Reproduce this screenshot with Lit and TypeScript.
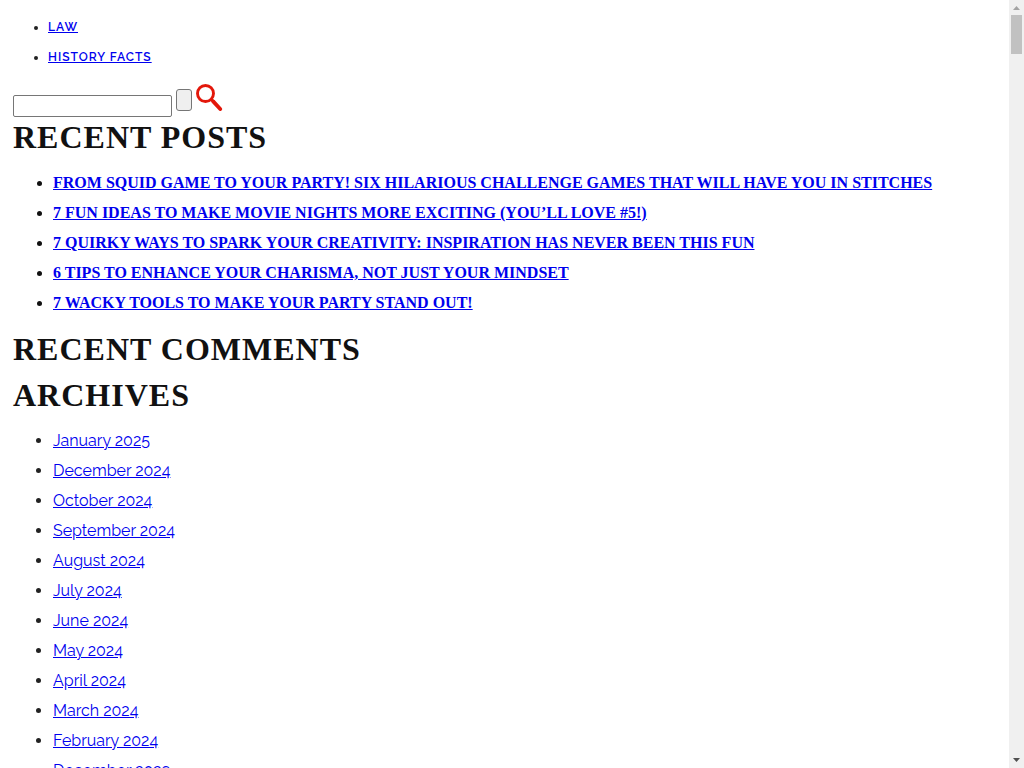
import { LitElement, html, css } from "lit";
import { customElement } from "lit/decorators.js";

const TOPICS = ["Law", "History Facts"];

const POSTS = [
  "From Squid Game to Your Party! Six Hilarious Challenge Games That Will Have You in Stitches",
  "7 Fun Ideas to Make Movie Nights More Exciting (You’ll Love #5!)",
  "7 Quirky Ways to Spark Your Creativity: Inspiration Has Never Been This Fun",
  "6 Tips to Enhance Your Charisma, Not Just Your Mindset",
  "7 Wacky Tools to Make Your Party Stand Out!",
];

const MONTHS = [
  "January 2025",
  "December 2024",
  "October 2024",
  "September 2024",
  "August 2024",
  "July 2024",
  "June 2024",
  "May 2024",
  "April 2024",
  "March 2024",
  "February 2024",
  "December 2023",
];

@customElement("app-root")
export class AppRoot extends LitElement {
  static styles = css`
    :host {
      display: flex;
      height: 100vh;
      overflow: hidden;
      background: #fff;
      color: #222;
      font: 16px/30px Raleway, Lato, sans-serif;
    }
    .page {
      flex: 1;
      min-width: 0;
      overflow: hidden;
      padding: 12px 8px 0;
    }
    ul {
      margin: 0;
      padding: 0 0 0 40px;
    }
    a {
      color: #0000ee;
    }
    .topics {
      font-size: 12px;
      font-weight: 600;
      letter-spacing: 1px;
      text-transform: uppercase;
    }
    .body {
      padding: 0 5px;
    }
    .search {
      display: flex;
      gap: 4px;
      align-items: flex-start;
      padding-top: 11px;
      height: 31px;
    }
    .field {
      box-sizing: border-box;
      width: 159px;
      height: 22px;
      margin-top: 12px;
      border: 1px solid #767676;
      border-radius: 2px;
      background: #fff;
    }
    .submit {
      box-sizing: border-box;
      width: 16px;
      height: 22px;
      margin-top: 6px;
      padding: 0;
      border: 1px solid #767676;
      border-radius: 3px;
      background: #efefef;
    }
    h2 {
      margin: 0;
      color: #111;
      font: bold 32px/46px "Liberation Serif", serif;
      letter-spacing: 1px;
      text-transform: uppercase;
    }
    .posts,
    .months {
      margin: 8px 0;
    }
    .posts {
      color: #111;
      font-family: "Liberation Serif", serif;
      font-weight: bold;
      text-transform: uppercase;
    }
    .rail {
      flex: none;
      display: flex;
      flex-direction: column;
      align-items: center;
      width: 15px;
      background: #f0f0f0;
    }
    .arrow {
      flex: none;
      display: block;
    }
    .thumb {
      width: 11px;
      height: 39px;
      background: #c1c1c1;
    }
    .down {
      margin-top: auto;
    }
  `;

  private links(items: string[], kind: string) {
    return html`<ul class=${kind}>
      ${items.map((item) => html`<li><a href="#">${item}</a></li>`)}
    </ul>`;
  }

  render() {
    return html`
      <main class="page">
        <nav>${this.links(TOPICS, "topics")}</nav>
        <div class="body">
          <form class="search" role="search" @submit=${(e: Event) => e.preventDefault()}>
            <input class="field" type="text" aria-label="Search" />
            <button class="submit" type="submit" aria-label="Search"></button>
            <svg width="27" height="28" viewBox="0 0 27 28" fill="none" stroke="#e3170a" aria-hidden="true">
              <circle cx="9.5" cy="10.5" r="8" stroke-width="2.9" />
              <path d="M15.200 16.200l3 3" stroke-width="3" />
              <path d="M17.200 18.400l7 7.600" stroke-width="3.800" stroke-linecap="round" />
            </svg>
          </form>
          <h2>Recent Posts</h2>
          ${this.links(POSTS, "posts")}
          <h2>Recent Comments</h2>
          <h2>Archives</h2>
          ${this.links(MONTHS, "months")}
        </div>
      </main>
      <div class="rail" aria-hidden="true">
        <svg class="arrow" width="15" height="15"><path d="M4 10h7L7.500 6z" fill="#a3a3a3" /></svg>
        <div class="thumb"></div>
        <svg class="arrow down" width="15" height="15"><path d="M4 5h7L7.500 9z" fill="#505050" /></svg>
      </div>
    `;
  }
}
